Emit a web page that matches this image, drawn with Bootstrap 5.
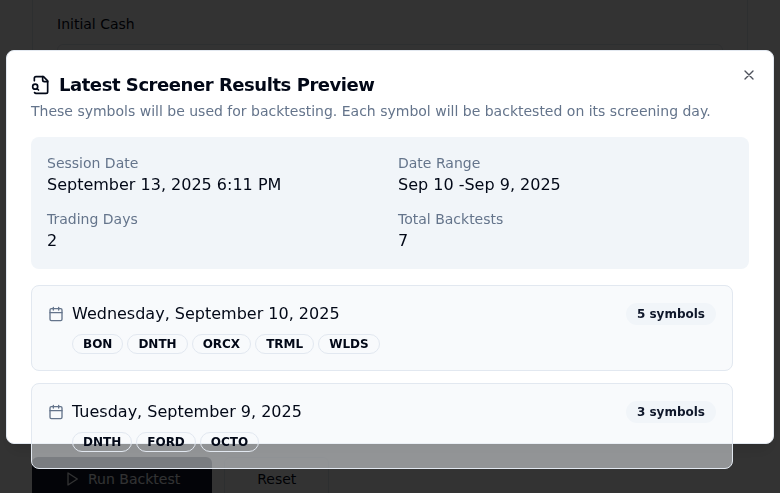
<!DOCTYPE html>
<html lang="en">
<head>
<meta charset="utf-8">
<meta name="viewport" content="width=device-width, initial-scale=1">
<title>Latest Screener Results Preview</title>
<link href="https://cdn.jsdelivr.net/npm/bootstrap@5.3.0/dist/css/bootstrap.min.css" rel="stylesheet">
<style>
  :root { --ink:#020817; --soft:#64748b; --line:#e2e8f0; --fill:#f1f5f9; }
  body { font-family:"DejaVu Sans",sans-serif; font-size:14px; line-height:20px; color:var(--ink); height:493px; overflow:hidden; }
  svg { fill:none; stroke:currentColor; stroke-width:2; stroke-linecap:round; stroke-linejoin:round; flex:none; }
  .page { padding:0 32px; height:493px; }
  .settings { height:433px; border:1px solid var(--line); border-top:0; border-radius:0 0 8px 8px; padding:14px 24px; }
  .field { height:40px; border:1px solid var(--line); border-radius:6px; margin-top:10px; }
  .actions { margin-top:24px; gap:12px; }
  .action { height:44px; padding:0 32px; border-radius:6px; gap:8px; font-size:14px; line-height:20px; color:var(--ink); background:#fff; border:1px solid var(--line); }
  .action-main { background:#0f172a; color:#f8fafc; border:0; }
  .shade { z-index:10; background:rgba(0,0,0,.8); }
  .dialog-wrap { z-index:20; padding:50px 6px 0; }
  .dialog { height:394px; padding:24px; background:#fff; border:1px solid var(--line); border-radius:8px; box-shadow:0 10px 15px -3px rgba(0,0,0,.1),0 4px 6px -4px rgba(0,0,0,.1); }
  .dialog-title { font-size:18px; line-height:20px; font-weight:600; letter-spacing:-.45px; gap:8px; margin:0 0 6px; color:var(--ink); }
  .soft { color:var(--soft); }
  .closer { right:16px; top:16px; width:16px; height:16px; opacity:.7; color:var(--ink); line-height:0; }
  .summary { background:var(--fill); border-radius:8px; padding:16px; margin-top:16px; display:grid; grid-template-columns:1fr 1fr; gap:12px 16px; }
  .value { font-size:16px; line-height:24px; }
  .days { padding-right:16px; margin-top:16px; gap:12px; }
  .day { border:1px solid var(--line); border-radius:8px; padding:16px; background:rgba(241,245,249,.5); }
  .day-head { height:24px; margin-bottom:8px; }
  .symbols { padding-left:24px; gap:4px; }
  .pill { font-size:12px; line-height:16px; font-weight:600; border:1px solid var(--line); border-radius:99px; padding:1px 10px; }
  .count { background:var(--fill); color:#0f172a; border-color:transparent; padding:2px 10px; }
</style>
</head>
<body>
<main class="page">
  <section class="settings">
    <div>Initial Cash</div>
    <div class="field"></div>
  </section>
  <div class="actions d-flex">
    <button class="action action-main d-flex align-items-center">
      <svg width="16" height="16" viewBox="0 0 24 24"><polygon points="6 3 20 12 6 21 6 3"/></svg>Run Backtest
    </button>
    <button class="action d-flex align-items-center">Reset</button>
  </div>
</main>
<div class="shade position-fixed top-0 start-0 w-100 h-100"></div>
<div class="dialog-wrap position-fixed top-0 start-0 w-100">
  <div class="dialog position-relative" role="dialog">
    <h2 class="dialog-title d-flex align-items-center">
      <svg width="20" height="20" viewBox="0 0 24 24"><path d="M14 2v4a2 2 0 0 0 2 2h4"/><path d="M4.268 21a2 2 0 0 0 1.727 1H18a2 2 0 0 0 2-2V7l-5-5H6a2 2 0 0 0-2 2v3"/><path d="m9 18-1.5-1.5"/><circle cx="5" cy="14" r="3"/></svg>
      <span>Latest Screener Results Preview</span>
    </h2>
    <p class="soft m-0">These symbols will be used for backtesting. Each symbol will be backtested on its screening day.</p>
    <div class="summary">
      <div><div class="soft">Session Date</div><div class="value">September 13, 2025 6:11 PM</div></div>
      <div><div class="soft">Date Range</div><div class="value">Sep 10 -Sep 9, 2025</div></div>
      <div><div class="soft">Trading Days</div><div class="value">2</div></div>
      <div><div class="soft">Total Backtests</div><div class="value">7</div></div>
    </div>
    <div class="days d-flex flex-column">
      <div class="day">
        <div class="day-head d-flex align-items-center justify-content-between">
          <div class="d-flex align-items-center gap-2"><svg class="soft" width="16" height="16" viewBox="0 0 24 24"><path d="M8 2v4M16 2v4"/><rect width="18" height="18" x="3" y="4" rx="2"/><path d="M3 10h18"/></svg><span class="value">Wednesday, September 10, 2025</span></div>
          <span class="pill count">5 symbols</span>
        </div>
        <div class="symbols d-flex"><span class="pill">BON</span><span class="pill">DNTH</span><span class="pill">ORCX</span><span class="pill">TRML</span><span class="pill">WLDS</span></div>
      </div>
      <div class="day">
        <div class="day-head d-flex align-items-center justify-content-between">
          <div class="d-flex align-items-center gap-2"><svg class="soft" width="16" height="16" viewBox="0 0 24 24"><path d="M8 2v4M16 2v4"/><rect width="18" height="18" x="3" y="4" rx="2"/><path d="M3 10h18"/></svg><span class="value">Tuesday, September 9, 2025</span></div>
          <span class="pill count">3 symbols</span>
        </div>
        <div class="symbols d-flex"><span class="pill">DNTH</span><span class="pill">FORD</span><span class="pill">OCTO</span></div>
      </div>
    </div>
    <a class="closer position-absolute" role="button" aria-label="Close"><svg width="16" height="16" viewBox="0 0 24 24"><path d="M18 6 6 18M6 6l12 12"/></svg></a>
  </div>
</div>
<script src="https://cdn.jsdelivr.net/npm/bootstrap@5.3.0/dist/js/bootstrap.bundle.min.js"></script>
</body>
</html>
